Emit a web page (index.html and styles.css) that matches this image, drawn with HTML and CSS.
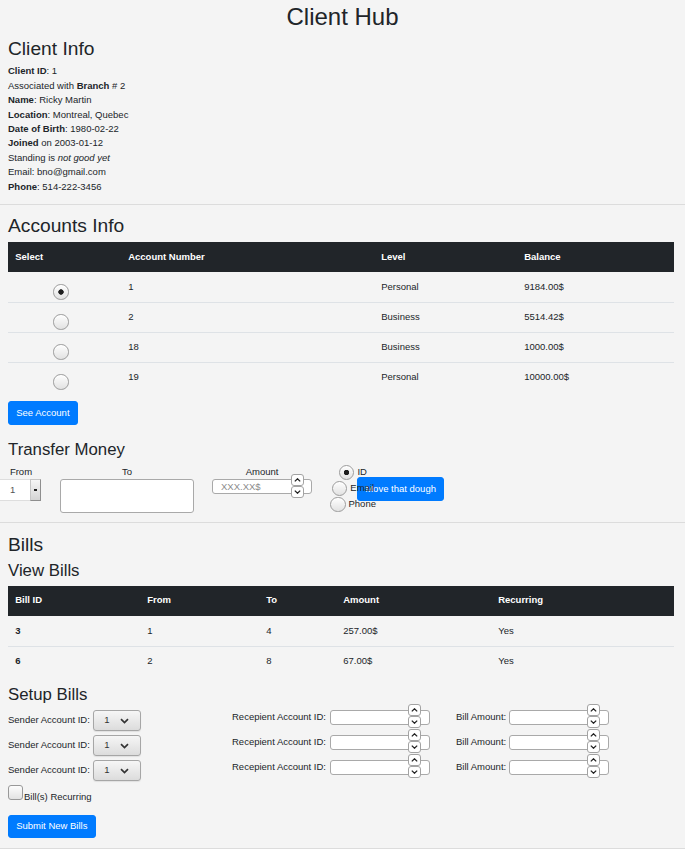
FILE: index.html
```html
<!DOCTYPE html>
<html lang="en">
<head>
<meta charset="utf-8">
<title>Client Hub</title>
<link rel="stylesheet" href="styles.css">
</head>
<body>
<h1 class="hub-title">Client Hub</h1>

<section class="section">
  <h2 class="h2">Client Info</h2>
  <div class="info">
    <div><strong>Client ID</strong>: 1</div>
    <div>Associated with <strong>Branch</strong> # 2</div>
    <div><strong>Name</strong>: Ricky Martin</div>
    <div><strong>Location</strong>: Montreal, Quebec</div>
    <div><strong>Date of Birth</strong>: 1980-02-22</div>
    <div><strong>Joined</strong> on 2003-01-12</div>
    <div>Standing is <em>not good yet</em></div>
    <div>Email: bno@gmail.com</div>
    <div><strong>Phone</strong>: 514-222-3456</div>
  </div>
</section>

<hr class="rule">

<section class="section">
  <h2 class="h2">Accounts Info</h2>
  <table class="data-table">
    <colgroup><col class="c113"><col class="c253"><col class="c143"><col class="c157"></colgroup>
    <thead>
      <tr><th>Select</th><th>Account Number</th><th>Level</th><th>Balance</th></tr>
    </thead>
    <tbody>
      <tr><td><input type="radio" name="acct" class="radio radio-cell" checked></td><td>1</td><td>Personal</td><td>9184.00$</td></tr>
      <tr><td><input type="radio" name="acct" class="radio radio-cell"></td><td>2</td><td>Business</td><td>5514.42$</td></tr>
      <tr><td><input type="radio" name="acct" class="radio radio-cell"></td><td>18</td><td>Business</td><td>1000.00$</td></tr>
      <tr><td><input type="radio" name="acct" class="radio radio-cell"></td><td>19</td><td>Personal</td><td>10000.00$</td></tr>
    </tbody>
  </table>
  <button class="btn btn-see">See Account</button>

  <h3 class="h3">Transfer Money</h3>
  <div class="transfer">
    <div class="field field-from">
      <div class="field-label">From</div>
      <div class="mini-select"><span class="ms-val">1</span><span class="ms-btn"><i class="ms-dash"></i></span></div>
    </div>
    <div class="field field-to">
      <div class="field-label">To</div>
      <textarea class="to-box"></textarea>
    </div>
    <div class="field field-amount">
      <div class="field-label">Amount</div>
      <span class="num">
        <input type="text" class="num-input amount-input" placeholder="XXX.XX$">
        <span class="spin spin-amount">
          <span class="spin-b"><svg width="7" height="4" viewBox="0 0 7 4"><polyline points="0.8,3.4 3.5,0.8 6.2,3.4" fill="none" stroke="#222" stroke-width="1.3"/></svg></span>
          <span class="spin-b"><svg width="7" height="4" viewBox="0 0 7 4"><polyline points="0.8,0.6 3.5,3.2 6.2,0.6" fill="none" stroke="#222" stroke-width="1.3"/></svg></span>
        </span>
      </span>
    </div>
    <div class="radio-col">
      <label class="radio-row"><input type="radio" name="by" class="radio" checked>ID</label>
      <label class="radio-row"><input type="radio" name="by" class="radio">Email</label>
      <label class="radio-row"><input type="radio" name="by" class="radio">Phone</label>
    </div>
    <button class="btn move-btn">Move that dough</button>
  </div>
</section>

<hr class="rule">

<section class="section">
  <h2 class="h2">Bills</h2>
  <h3 class="h3">View Bills</h3>
  <table class="data-table">
    <colgroup><col class="c132"><col class="c119"><col class="c77"><col class="c155"><col class="c183"></colgroup>
    <thead>
      <tr><th>Bill ID</th><th>From</th><th>To</th><th>Amount</th><th>Recurring</th></tr>
    </thead>
    <tbody>
      <tr><th>3</th><td>1</td><td>4</td><td>257.00$</td><td>Yes</td></tr>
      <tr><th>6</th><td>2</td><td>8</td><td>67.00$</td><td>Yes</td></tr>
    </tbody>
  </table>

  <h3 class="h3">Setup Bills</h3>
  <div class="setup">
    <div class="setup-col">
      <div class="s-row"><span>Sender Account ID:</span><span class="sel"><span>1</span><svg width="9" height="6" viewBox="0 0 9 6"><polyline points="1,1.2 4.5,4.6 8,1.2" fill="none" stroke="#333" stroke-width="1.7"/></svg></span></div>
      <div class="s-row"><span>Sender Account ID:</span><span class="sel"><span>1</span><svg width="9" height="6" viewBox="0 0 9 6"><polyline points="1,1.2 4.5,4.6 8,1.2" fill="none" stroke="#333" stroke-width="1.7"/></svg></span></div>
      <div class="s-row"><span>Sender Account ID:</span><span class="sel"><span>1</span><svg width="9" height="6" viewBox="0 0 9 6"><polyline points="1,1.2 4.5,4.6 8,1.2" fill="none" stroke="#333" stroke-width="1.7"/></svg></span></div>
    </div>
    <div class="setup-col">
      <div class="n-row n-recip"><span>Recepient Account ID:</span><span class="num"><input type="text" class="num-input"><span class="spin"><span class="spin-b"><svg width="7" height="4" viewBox="0 0 7 4"><polyline points="0.8,3.4 3.5,0.8 6.2,3.4" fill="none" stroke="#222" stroke-width="1.3"/></svg></span><span class="spin-b"><svg width="7" height="4" viewBox="0 0 7 4"><polyline points="0.8,0.6 3.5,3.2 6.2,0.6" fill="none" stroke="#222" stroke-width="1.3"/></svg></span></span></span></div>
      <div class="n-row n-recip"><span>Recepient Account ID:</span><span class="num"><input type="text" class="num-input"><span class="spin"><span class="spin-b"><svg width="7" height="4" viewBox="0 0 7 4"><polyline points="0.8,3.4 3.5,0.8 6.2,3.4" fill="none" stroke="#222" stroke-width="1.3"/></svg></span><span class="spin-b"><svg width="7" height="4" viewBox="0 0 7 4"><polyline points="0.8,0.6 3.5,3.2 6.2,0.6" fill="none" stroke="#222" stroke-width="1.3"/></svg></span></span></span></div>
      <div class="n-row n-recip"><span>Recepient Account ID:</span><span class="num"><input type="text" class="num-input"><span class="spin"><span class="spin-b"><svg width="7" height="4" viewBox="0 0 7 4"><polyline points="0.8,3.4 3.5,0.8 6.2,3.4" fill="none" stroke="#222" stroke-width="1.3"/></svg></span><span class="spin-b"><svg width="7" height="4" viewBox="0 0 7 4"><polyline points="0.8,0.6 3.5,3.2 6.2,0.6" fill="none" stroke="#222" stroke-width="1.3"/></svg></span></span></span></div>
    </div>
    <div class="setup-col">
      <div class="n-row"><span>Bill Amount:</span><span class="num"><input type="text" class="num-input"><span class="spin"><span class="spin-b"><svg width="7" height="4" viewBox="0 0 7 4"><polyline points="0.8,3.4 3.5,0.8 6.2,3.4" fill="none" stroke="#222" stroke-width="1.3"/></svg></span><span class="spin-b"><svg width="7" height="4" viewBox="0 0 7 4"><polyline points="0.8,0.6 3.5,3.2 6.2,0.6" fill="none" stroke="#222" stroke-width="1.3"/></svg></span></span></span></div>
      <div class="n-row"><span>Bill Amount:</span><span class="num"><input type="text" class="num-input"><span class="spin"><span class="spin-b"><svg width="7" height="4" viewBox="0 0 7 4"><polyline points="0.8,3.4 3.5,0.8 6.2,3.4" fill="none" stroke="#222" stroke-width="1.3"/></svg></span><span class="spin-b"><svg width="7" height="4" viewBox="0 0 7 4"><polyline points="0.8,0.6 3.5,3.2 6.2,0.6" fill="none" stroke="#222" stroke-width="1.3"/></svg></span></span></span></div>
      <div class="n-row"><span>Bill Amount:</span><span class="num"><input type="text" class="num-input"><span class="spin"><span class="spin-b"><svg width="7" height="4" viewBox="0 0 7 4"><polyline points="0.8,3.4 3.5,0.8 6.2,3.4" fill="none" stroke="#222" stroke-width="1.3"/></svg></span><span class="spin-b"><svg width="7" height="4" viewBox="0 0 7 4"><polyline points="0.8,0.6 3.5,3.2 6.2,0.6" fill="none" stroke="#222" stroke-width="1.3"/></svg></span></span></span></div>
    </div>
  </div>
  <label class="check-row"><input type="checkbox" class="check">Bill(s) Recurring</label>
  <button class="btn btn-submit">Submit New Bills</button>
</section>

<hr class="rule">
</body>
</html>
```

FILE: styles.css
```css
* { box-sizing: border-box; }
html, body { margin: 0; }
body {
  background: #f4f4f4;
  color: #212529;
  font-family: "Liberation Sans", Arial, sans-serif;
  font-size: 9.5px;
  line-height: 14.4px;
  padding-top: 3px;
}
.hub-title {
  margin: 0 0 4.8px;
  font-size: 24px;
  line-height: 28.8px;
  font-weight: 400;
  text-align: center;
}
.section { padding: 0 11px 0 8px; }
.h2 {
  margin: 0 0 4.8px;
  font-size: 19.2px;
  line-height: 23.04px;
  font-weight: 400;
}
.h3 {
  margin: 0 0 4.8px;
  font-size: 16.8px;
  line-height: 20.16px;
  font-weight: 400;
}
.rule {
  border: 0;
  border-top: 1px solid #dcdcdc;
  height: 0;
  margin: 9.6px 0;
}
strong { font-weight: 700; }

/* tables */
.data-table {
  width: 666px;
  border-collapse: separate;
  border-spacing: 0;
  table-layout: fixed;
  margin-top: 0.6px;
  margin-bottom: 9px;
}
.c113 { width: 113px; } .c253 { width: 253px; } .c143 { width: 143px; } .c157 { width: 157px; }
.c132 { width: 132px; } .c119 { width: 119px; } .c77 { width: 77px; } .c155 { width: 155px; } .c183 { width: 183px; }
.data-table tr { height: 30px; }
.data-table th, .data-table td {
  padding: 7px 7.2px 0;
  text-align: left;
  vertical-align: top;
}
.data-table thead th {
  background: #212529;
  color: #fff;
  font-weight: 700;
  padding-top: 7.4px;
}
.data-table tbody td, .data-table tbody th {
  border-top: 1px solid #dee2e6;
}
.data-table tbody th { font-weight: 700; }
.data-table tbody tr:first-child > * { border-top-color: transparent; }

/* radio */
.radio {
  -webkit-appearance: none;
  appearance: none;
  width: 15.5px;
  height: 15.5px;
  margin: 0;
  border-radius: 50%;
  border: 1px solid #9c9c9c;
  background: linear-gradient(#fefefe, #e2e2e2);
  box-shadow: inset 0 1px 1px rgba(255,255,255,.9);
  flex: none;
}
.radio:checked {
  background: radial-gradient(circle, #1e1e1e 0 2.4px, rgba(30,30,30,0) 3px), linear-gradient(#fefefe, #e2e2e2);
}
.radio-cell { display: block; margin: 4.3px 0 0 38px; }

/* buttons */
.btn {
  display: block;
  font-family: inherit;
  font-size: 9.5px;
  line-height: 14.4px;
  padding: 3.6px 7.2px;
  border: 1px solid #007bff;
  border-radius: 3px;
  background: #007bff;
  color: #fff;
  margin: 0;
}
.btn-see { margin-bottom: 15px; }
.btn-submit { margin-top: 10.3px; }

/* transfer */
.transfer {
  display: flex;
  align-items: flex-start;
  margin-left: -8px;
  position: relative;
}
.field { text-align: center; }
.field-label { line-height: 14.4px; height: 14.4px; }
.field-from { width: 42px; margin-right: 18px; }
.field-to { width: 134px; margin-right: 18px; }
.field-amount { width: 100px; margin-right: 18px; }
.mini-select {
  display: flex;
  width: 41px;
  height: 22px;
  text-align: left;
}
.ms-val {
  flex: 1;
  background: #fff;
  border-top: 1px solid #dedede;
  border-bottom: 1px solid #dedede;
  color: #555;
  padding-left: 10px;
  line-height: 20px;
}
.ms-btn {
  width: 11.5px;
  background: linear-gradient(#f6f6f6, #d4d4d4);
  border: 1px solid #c6c6c6;
  border-right-color: #8e8e8e;
  border-bottom-color: #8e8e8e;
  display: flex;
  align-items: center;
  justify-content: center;
}
.ms-dash { display: block; width: 3px; height: 1.5px; background: #222; }
.to-box {
  display: block;
  width: 134px;
  height: 33.5px;
  margin: 0;
  border: 1px solid #a9a9a9;
  border-radius: 3px;
  background: #fff;
  resize: none;
}
.num { position: relative; display: inline-block; vertical-align: middle; }
.num-input {
  display: block;
  width: 100px;
  height: 15px;
  margin: 0;
  padding: 0 0 0 8px;
  border: 1px solid #a9a9a9;
  border-radius: 3px;
  background: #fff;
  font-family: inherit;
  font-size: 9.5px;
  color: #212529;
  text-align: left;
}
.amount-input { height: 14.3px; }
.num-input::placeholder { color: #8a8a8a; }
.spin {
  position: absolute;
  right: 9.5px;
  top: -5.5px;
  display: flex;
  flex-direction: column;
}
.spin-amount { right: 8.5px; top: -5px; }
.spin-b {
  width: 13px;
  height: 12px;
  background: #fff;
  border: 1px solid #a3a3a3;
  border-radius: 3px;
  display: flex;
  align-items: center;
  justify-content: center;
}
.radio-col {
  display: flex;
  flex-direction: column;
  align-items: center;
  position: relative;
  z-index: 1;
}
.radio-row {
  display: flex;
  align-items: center;
  gap: 3px;
  height: 15.9px;
}
.move-btn {
  position: absolute;
  left: 357px;
  top: 12.7px;
  padding: 3.4px 7.2px;
}

/* setup bills */
.setup {
  display: grid;
  grid-template-columns: 224px 224px 1fr;
}
.s-row {
  display: flex;
  align-items: center;
  gap: 3px;
  height: 22px;
  margin-bottom: 3px;
}
.sel {
  display: flex;
  align-items: center;
  gap: 10px;
  width: 48px;
  height: 21.6px;
  padding-left: 10.5px;
  border: 1px solid #a6a6a6;
  border-radius: 3px;
  background: linear-gradient(#f6f6f6, #dcdcdc);
  box-shadow: 0 1px 1px rgba(0,0,0,.08);
  color: #333;
}
.n-row {
  display: flex;
  align-items: center;
  gap: 3px;
  height: 15px;
  margin-bottom: 10px;
}
.n-recip { gap: 4px; }
.check-row { display: block; }
.check {
  -webkit-appearance: none;
  appearance: none;
  display: inline-block;
  width: 15px;
  height: 15.4px;
  margin: 0 1px 0 0;
  border: 1px solid #999;
  border-radius: 3px;
  background: linear-gradient(#fdfdfd, #e3e3e3);
  vertical-align: baseline;
}
```
